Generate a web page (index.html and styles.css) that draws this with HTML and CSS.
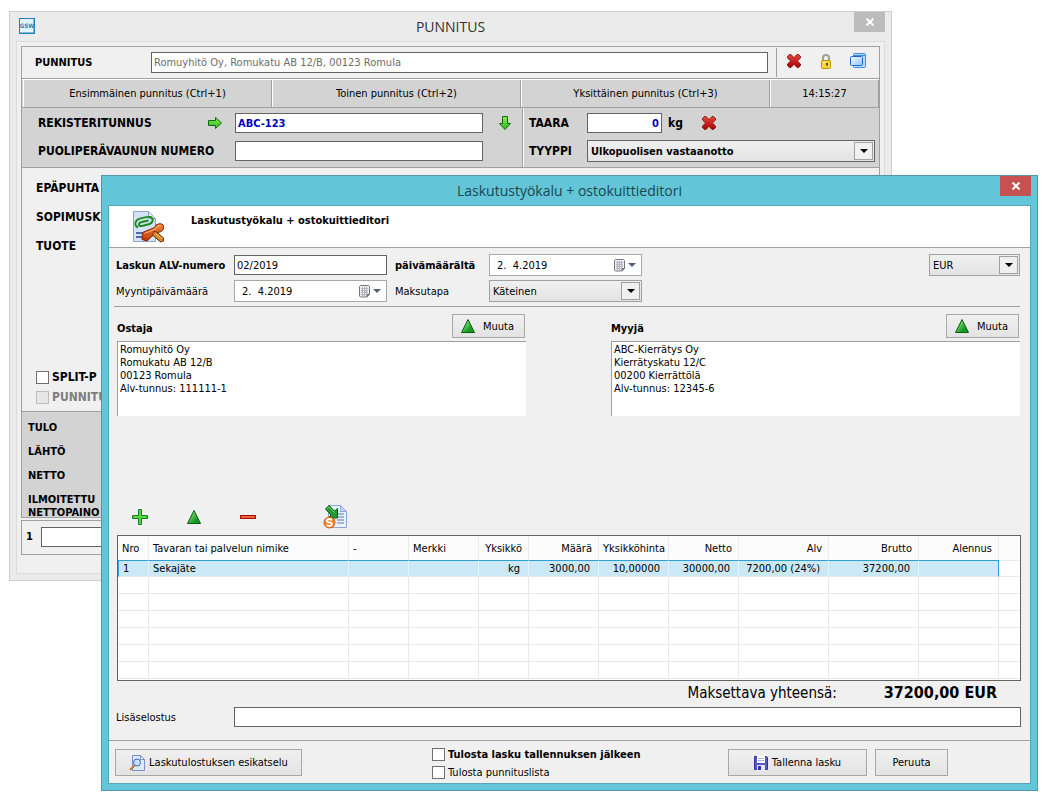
FILE: index.html
```html
<!DOCTYPE html>
<html lang="fi">
<head>
    <meta charset="UTF-8">
    <meta name="viewport" content="width=device-width, initial-scale=1.0">
    <title>Laskutustyökalu + ostokuittieditori</title>
    <link rel="stylesheet" href="styles.css">
</head>
<body>

<!-- Shared icons -->
<svg class="icon-defs" width="0" height="0" aria-hidden="true">
    <defs>
        <linearGradient id="red" x1="0" y1="0" x2="0" y2="1">
            <stop offset="0" stop-color="#e8473c"/>
            <stop offset="1" stop-color="#a80000"/>
        </linearGradient>
        <linearGradient id="lime" x1="0" y1="0" x2="0" y2="1">
            <stop offset="0" stop-color="#8cf04a"/>
            <stop offset="1" stop-color="#2fb41c"/>
        </linearGradient>
        <linearGradient id="green" x1="0" y1="0" x2="1" y2="1">
            <stop offset="0.2" stop-color="#8be07a"/>
            <stop offset="0.7" stop-color="#159a20"/>
        </linearGradient>
        <linearGradient id="blue" x1="0" y1="0" x2="1" y2="1">
            <stop offset="0" stop-color="#f4faff"/>
            <stop offset="1" stop-color="#8cc4f8"/>
        </linearGradient>
        <linearGradient id="orange" x1="0" y1="0" x2="0" y2="1">
            <stop offset="0" stop-color="#f58a3c"/>
            <stop offset="1" stop-color="#b83208"/>
        </linearGradient>
        <symbol id="cross" viewBox="0 0 16 16">
            <path d="M1.5 3.5 3.5 1.5H5L8 4.8 11 1.5h1.5l2 2V5l-3.2 3 3.2 3v1.5l-2 2H11L8 11.2 5 14.5H3.500l-2-2V11l3.200-3L1.500 5z" fill="url(#red)" stroke="#8c1410"/>
        </symbol>
        <symbol id="triangle" viewBox="0 0 16 16">
            <path d="M8 1.500 14.500 14.500H1.500z" fill="url(#green)" stroke="#0a5c14"/>
        </symbol>
        <symbol id="calendar" viewBox="0 0 12 13">
            <path d="M1.500.5h8l1 1v8l-2.500 2.500h-6.500l-1-1v-9.500z" fill="#ececf2" stroke="#77777d"/>
            <path d="M2 3.500h7M2 5.500h7M2 7.500h7M2 9.500h5M3.500 2v9M5.500 2v9M7.500 2v7" stroke="#b4b4c2"/>
            <path d="M10.500 9.500h-2.500v2.500z" fill="#66666c" stroke="#77777d"/>
        </symbol>
    </defs>
</svg>

<div class="desktop">

    <!-- Weighing window -->
    <div class="window main-window">
        <div class="titlebar">
            <svg class="app-icon" width="16" height="16" viewBox="0 0 16 16">
                <rect x=".5" y=".5" width="15" height="15" fill="#e4f4fc" stroke="#2382b4"/>
                <path d="M15 1v14H1" fill="none" stroke="#2382b4"/>
                <text x="8" y="10" text-anchor="middle">GSW</text>
            </svg>
            <h1>PUNNITUS</h1>
            <button type="button" class="close" aria-label="Sulje">
                <svg width="8" height="8" viewBox="0 0 8 8"><path d="M.5.5l7 7M7.500.5l-7 7"/></svg>
            </button>
        </div>
        <div class="client">
            <div class="panel">
                <div class="site-row">
                    <label for="site">PUNNITUS</label>
                    <input type="text" id="site" value="Romuyhitö Oy, Romukatu AB 12/B, 00123 Romula">
                    <div class="site-tools">
                        <button type="button" class="icon-btn" aria-label="Poista"><svg width="16" height="16"><use href="#cross"/></svg></button>
                        <button type="button" class="icon-btn" aria-label="Lukitse">
                            <svg width="16" height="16" viewBox="0 0 16 16">
                                <path d="M5 8V4.500Q5 2 8 2t3 2.500V8" fill="none" stroke="#a0a094" stroke-width="2"/>
                                <rect x="3.500" y="7.500" width="9" height="8" rx="1" fill="#f4d838" stroke="#b8920c"/>
                                <path d="M5 9.500h3" stroke="#fff6a8"/>
                                <path d="M8 10h2v1l-.5 2h-1L8 11z" fill="#5a4400"/>
                            </svg>
                        </button>
                        <button type="button" class="icon-btn" aria-label="Ikkunat">
                            <svg width="16" height="16" viewBox="0 0 16 16">
                                <rect x="3.500" y=".5" width="12" height="14" rx="1" fill="#b4dcff" stroke="#3c8ce0"/>
                                <path d="M4 2.500h11" stroke="#3c8ce0"/>
                                <rect x=".5" y="3.500" width="12" height="9" rx="1" fill="url(#blue)" stroke="#2468c8"/>
                            </svg>
                        </button>
                    </div>
                </div>
                <div class="modes">
                    <button type="button">Ensimmäinen punnitus (Ctrl+1)</button>
                    <button type="button">Toinen punnitus (Ctrl+2)</button>
                    <button type="button">Yksittäinen punnitus (Ctrl+3)</button>
                    <div class="clock">14:15:27</div>
                </div>
                <div class="weigh">
                    <div class="weigh-left">
                        <div class="weigh-row">
                            <label for="plate">REKISTERITUNNUS</label>
                            <svg class="next" width="16" height="16" viewBox="0 0 16 16"><path d="M1.500 5.500h7v-3l6 5.500-6 5.500v-3h-7z" fill="url(#lime)" stroke="#0e6a10"/></svg>
                            <input type="text" id="plate" class="value" value="ABC-123">
                            <svg class="down" width="16" height="16" viewBox="0 0 16 16"><path d="M5.500 1.500v7h-3l5.500 6 5.500-6h-3v-7z" fill="url(#lime)" stroke="#0e6a10"/></svg>
                        </div>
                        <div class="weigh-row">
                            <label for="trailer">PUOLIPERÄVAUNUN NUMERO</label>
                            <input type="text" id="trailer">
                        </div>
                    </div>
                    <div class="weigh-right">
                        <div class="weigh-row">
                            <label for="tare">TAARA</label>
                            <input type="text" id="tare" class="value tare" value="0">
                            <span class="unit">kg</span>
                            <button type="button" class="icon-btn" aria-label="Tyhjennä"><svg width="16" height="16"><use href="#cross"/></svg></button>
                        </div>
                        <div class="weigh-row">
                            <label for="type">TYYPPI</label>
                            <span class="select dark">
                                <select id="type"><option>Ulkopuolisen vastaanotto</option></select>
                            </span>
                        </div>
                    </div>
                </div>
                <div class="details">
                    <p>EPÄPUHTA</p>
                    <p>SOPIMUSK</p>
                    <p>TUOTE</p>
                    <label class="check split"><input type="checkbox">SPLIT-P</label>
                    <label class="check disabled"><input type="checkbox" disabled>PUNNITU</label>
                </div>
                <div class="weights">
                    <p>TULO</p>
                    <p>LÄHTÖ</p>
                    <p>NETTO</p>
                    <p>ILMOITETTU<br>NETTOPAINO</p>
                </div>
            </div>
            <div class="line-box">
                <label for="line1">1</label>
                <input type="text" id="line1">
            </div>
        </div>
    </div>

    <!-- Invoice dialog -->
    <div class="window dialog">
        <div class="titlebar">
            <h1>Laskutustyökalu + ostokuittieditori</h1>
            <button type="button" class="close" aria-label="Sulje">
                <svg width="8" height="8" viewBox="0 0 8 8"><path d="M.5.5l7 7M7.500.5l-7 7"/></svg>
            </button>
        </div>
        <form class="client">
            <div class="dialog-head">
                <svg width="32" height="32" viewBox="0 0 32 32">
                    <path d="M1.500.5h15l7 7v23h-22z" fill="#d4e4f8" stroke="#8ca0c8"/>
                    <path d="M16.500.5v7h7z" fill="#f6faff" stroke="#8ca0c8"/>
                    <path d="M4 22h7M4 26h7" stroke="#5468b0" stroke-width="2"/>
                    <path d="M6 16.500q-3-1-2.500-4.500t5-4.500l7-1.500q4-1 5 2t-3 5l-7.500 2q-3 .5-3-1.500t3-2.500l6.500-1.500" fill="none" stroke="#1c8a24" stroke-width="2"/>
                    <path d="M5 14q-1-4 4-5.500l7-1.500" fill="none" stroke="#a4e4a0"/>
                    <path d="M10.500 21.500l12-5 1.500-2.500q3-2 6-1l2 2q0 4-3 5.500l-6 2-8 7.500-5-1.500z" fill="url(#orange)" stroke="#8c2404"/>
                    <path d="M21.500 20.500l3 .5 7 6v3l-3 1-8-7z" fill="#d88428" stroke="#6c2c04"/>
                    <path d="M12.500 22.500l11-4.500 2-3 3-.5" fill="none" stroke="#ffb070"/>
                    <path d="M12 25l4 1 6-5" fill="none" stroke="#d85418"/>
                    <path d="M23.500 22.500l6 5" stroke="#ffcc60"/>
                </svg>
                <h2>Laskutustyökalu + ostokuittieditori</h2>
            </div>

            <div class="fields">
                <label for="vat" class="strong">Laskun ALV-numero</label>
                <input type="text" id="vat" value="02/2019">
                <label for="from" class="strong">päivämäärältä</label>
                <div class="date">
                    <input type="text" id="from" value="2.  4.2019">
                    <svg width="12" height="13"><use href="#calendar"/></svg>
                    <svg width="8" height="5"><path d="M0 0h8l-4 4z" fill="#50607c"/></svg>
                </div>
                <span class="select currency">
                    <select aria-label="Valuutta"><option>EUR</option></select>
                </span>
                <label for="sale">Myyntipäivämäärä</label>
                <div class="date">
                    <input type="text" id="sale" value="2.  4.2019">
                    <svg width="12" height="13"><use href="#calendar"/></svg>
                    <svg width="8" height="5"><path d="M0 0h8l-4 4z" fill="#50607c"/></svg>
                </div>
                <label for="pay">Maksutapa</label>
                <span class="select">
                    <select id="pay"><option>Käteinen</option></select>
                </span>
            </div>

            <div class="parties">
                <div class="party">
                    <div class="party-head">
                        <label for="buyer">Ostaja</label>
                        <button type="button" class="btn"><svg width="16" height="16"><use href="#triangle"/></svg>Muuta</button>
                    </div>
                    <textarea id="buyer">Romuyhitö Oy
Romukatu AB 12/B
00123 Romula
Alv-tunnus: 111111-1</textarea>
                </div>
                <div class="party">
                    <div class="party-head">
                        <label for="seller">Myyjä</label>
                        <button type="button" class="btn"><svg width="16" height="16"><use href="#triangle"/></svg>Muuta</button>
                    </div>
                    <textarea id="seller">ABC-Kierrätys Oy
Kierrätyskatu 12/C
00200 Kierrättölä
Alv-tunnus: 12345-6</textarea>
                </div>
            </div>

            <div class="tools">
                <button type="button" class="icon-btn" aria-label="Lisää">
                    <svg width="16" height="16" viewBox="0 0 16 16"><path d="M6.500.5h3v6h6v3h-6v6h-3v-6h-6v-3h6z" fill="#5cd444" stroke="#128020"/></svg>
                </button>
                <button type="button" class="icon-btn" aria-label="Muuta"><svg width="16" height="16"><use href="#triangle"/></svg></button>
                <button type="button" class="icon-btn" aria-label="Poista">
                    <svg width="16" height="16" viewBox="0 0 16 16"><rect x=".5" y="6.500" width="15" height="3" fill="#f0603c" stroke="#a01408"/></svg>
                </button>
                <button type="button" class="icon-btn import" aria-label="Tuo">
                    <svg width="24" height="24" viewBox="0 0 24 24">
                        <path d="M5.500.5h12l6 6v16h-18z" fill="#eaf2fc" stroke="#8ca4d4"/>
                        <path d="M17.500.5v6h6z" fill="#c4dcf8" stroke="#8ca4d4"/>
                        <path d="M14 9h7M14 12h7M14 15h7M14 18h7" stroke="#6070b0"/>
                        <path d="M2.500 4l3.500-3.500 5.500 5.500 3-2.500v9.500h-9.500l3-3z" fill="#1f9c34" stroke="#0a5c14"/>
                        <path d="M4 4l2-2 5.500 5.500" fill="none" stroke="#6cd068"/>
                        <circle cx="6.500" cy="17.500" r="5.500" fill="#f08020" stroke="#d06008"/>
                        <path d="M9 15q-4-2-5 0t2.500 2.500 2 2.500-5 0" fill="none" stroke="#fff" stroke-width="2"/>
                    </svg>
                </button>
            </div>

            <div class="grid-box">
                <table>
                    <colgroup>
                        <col class="c-nr"><col class="c-name"><col class="c-dash"><col class="c-num"><col class="c-unit"><col class="c-num"><col class="c-num"><col class="c-num"><col class="c-sum"><col class="c-sum"><col class="c-disc"><col>
                    </colgroup>
                    <thead>
                        <tr>
                            <th>Nro</th><th>Tavaran tai palvelun nimike</th><th>-</th><th>Merkki</th>
                            <th class="num">Yksikkö</th><th class="num">Määrä</th><th class="num">Yksikköhinta</th><th class="num">Netto</th>
                            <th class="num">Alv</th><th class="num">Brutto</th><th class="num">Alennus</th><th></th>
                        </tr>
                    </thead>
                    <tbody>
                        <tr class="selected">
                            <td>1</td><td>Sekajäte</td><td></td><td></td>
                            <td class="num">kg</td><td class="num">3000,00</td><td class="num">10,00000</td><td class="num">30000,00</td>
                            <td class="num">7200,00 (24%)</td><td class="num">37200,00</td><td></td><td></td>
                        </tr>
                        <tr><td></td><td></td><td></td><td></td><td></td><td></td><td></td><td></td><td></td><td></td><td></td><td></td></tr>
                        <tr><td></td><td></td><td></td><td></td><td></td><td></td><td></td><td></td><td></td><td></td><td></td><td></td></tr>
                        <tr><td></td><td></td><td></td><td></td><td></td><td></td><td></td><td></td><td></td><td></td><td></td><td></td></tr>
                        <tr><td></td><td></td><td></td><td></td><td></td><td></td><td></td><td></td><td></td><td></td><td></td><td></td></tr>
                        <tr><td></td><td></td><td></td><td></td><td></td><td></td><td></td><td></td><td></td><td></td><td></td><td></td></tr>
                        <tr><td></td><td></td><td></td><td></td><td></td><td></td><td></td><td></td><td></td><td></td><td></td><td></td></tr>
                    </tbody>
                </table>
            </div>

            <div class="total">
                <span>Maksettava yhteensä:</span>
                <strong>37200,00 EUR</strong>
            </div>

            <div class="note">
                <label for="note">Lisäselostus</label>
                <input type="text" id="note">
            </div>

            <div class="actions">
                <button type="button" class="btn preview">
                    <svg width="16" height="16" viewBox="0 0 16 16">
                        <path d="M3.500.5h8l4 4v11h-12z" fill="#dceafc" stroke="#7890c8"/>
                        <path d="M11.500.5v4h4z" fill="#fff" stroke="#7890c8"/>
                        <circle cx="8" cy="7.500" r="3.500" fill="#c4e0fc" stroke="#4464b0"/>
                        <path d="M5.500 10.500L1 15" stroke="#c87830" stroke-width="2"/>
                    </svg>
                    Laskutulostuksen esikatselu
                </button>
                <div class="checks">
                    <label class="check strong"><input type="checkbox">Tulosta lasku tallennuksen jälkeen</label>
                    <label class="check"><input type="checkbox">Tulosta punnituslista</label>
                </div>
                <button type="submit" class="btn save">
                    <svg width="14" height="16" viewBox="0 0 14 16">
                        <path d="M.5 1.500h12l1 1v12H.5z" fill="#5458c4" stroke="#30349c"/>
                        <rect x="3" y="1" width="8" height="7" fill="#fff"/>
                        <path d="M4 3.500h6M4 5.500h6" stroke="#b0b4d8"/>
                        <rect x="3" y="10" width="8" height="5" fill="#e4e6f4"/>
                        <rect x="4" y="11" width="3" height="4" fill="#30349c"/>
                    </svg>
                    Tallenna lasku
                </button>
                <button type="button" class="btn cancel">Peruuta</button>
            </div>
        </form>
    </div>

</div>

</body>
</html>
```
FILE: styles.css
```css
* {
    box-sizing: border-box;
}

body {
    margin: 0;
    background: #fff;
    color: #000;
    font-family: "DejaVu Sans Condensed", "DejaVu Sans", sans-serif;
    font-size: 11px;
    line-height: 13px;
}

h1, h2, p {
    margin: 0;
}

input, select, textarea, button {
    font: inherit;
    color: inherit;
    border-radius: 0;
    margin: 0;
}

svg {
    display: block;
    flex: none;
}

.icon-defs {
    position: absolute;
}

.desktop {
    position: relative;
    min-height: 100vh;
}

/* Windows */
.window {
    position: absolute;
}

.main-window {
    left: 9px;
    right: 159px;
    top: 11px;
    background: #ebebeb;
    border: 1px solid #cbcfcf;
    padding: 0 6px 6px;
}

.dialog {
    left: 101px;
    right: 13px;
    top: 175px;
    background: #62c5d8;
    border: 1px solid #5497a6;
    padding: 0 6px 6px;
}

.titlebar {
    display: flex;
    align-items: center;
    justify-content: center;
    height: 29px;
    position: relative;
}

.titlebar h1 {
    font-family: "Open Sans", "Noto Sans", sans-serif;
    font-size: 14px;
    font-weight: normal;
    line-height: 20px;
    color: #333;
}

.dialog .titlebar h1 {
    color: #1c4650;
}

.app-icon {
    position: absolute;
    left: 3px;
    top: 6px;
}

.app-icon text {
    font-size: 6px;
    font-weight: bold;
    fill: #2382b4;
}

.close {
    position: absolute;
    right: 0;
    top: 0;
    width: 31px;
    height: 20px;
    border: none;
    background: #bcbcbc;
    display: flex;
    align-items: center;
    justify-content: center;
}

.dialog .close {
    background: #c75050;
}

.close path {
    stroke: #fff;
    stroke-width: 2;
}

.client {
    background: #f0f0f0;
    border: 1px solid #d8dcdc;
}

.dialog .client {
    border-color: #5aa5b5;
}

/* Common controls */
input[type="text"] {
    height: 20px;
    min-width: 0;
    border: 1px solid #646464;
    background: #fff;
    padding: 0 2px;
}

input[type="checkbox"] {
    appearance: none;
    width: 13px;
    height: 13px;
    border: 1px solid #707070;
    background: #fff;
    flex: none;
}

.check {
    display: flex;
    align-items: center;
    gap: 3px;
}

.strong {
    font-weight: bold;
}

.icon-btn {
    border: none;
    background: none;
    padding: 0;
}

.btn {
    display: flex;
    align-items: center;
    justify-content: center;
    border: 1px solid #a8a8a8;
    background: linear-gradient(#f0f0f0, #e3e3e3);
    padding: 0;
}

.select {
    position: relative;
    display: flex;
    height: 22px;
}

.select select {
    appearance: none;
    width: 100%;
    border: 1px solid #a0a0a0;
    background: linear-gradient(#f0f0f0, #e3e3e3);
    padding: 0 20px 0 3px;
}

.select::before {
    content: "";
    position: absolute;
    right: 2px;
    top: 2px;
    bottom: 2px;
    width: 17px;
    border: 1px solid #a0a0a0;
    background: #f0f0f0;
    pointer-events: none;
}

.select::after {
    content: "";
    position: absolute;
    right: 7px;
    top: 9px;
    border: 4px solid transparent;
    border-top-color: #000;
    border-bottom: none;
    pointer-events: none;
}

.select.dark select {
    border-color: #646464;
}

/* Weighing window */
.main-window .client {
    padding: 4px 4px 18px;
}

.main-window label,
.main-window p {
    font-weight: bold;
}

.panel {
    border: 1px solid #a0a0a0;
}

.site-row {
    display: flex;
    align-items: center;
    height: 32px;
    padding-left: 13px;
    border-bottom: 1px solid #a0a0a0;
}

.site-row label {
    width: 116px;
}

.site-row input[type="text"] {
    flex: 1;
    height: 21px;
    color: #6d6d6d;
}

.site-tools {
    display: flex;
    align-items: center;
    gap: 16px;
    height: 29px;
    margin-left: 8px;
    padding: 0 13px 3px 9px;
    border-left: 1px solid #a0a0a0;
}

.modes {
    display: grid;
    grid-template-columns: 249fr 249fr 249fr 109fr;
    height: 29px;
    padding-left: 1px;
    background: #d3d3d3;
    border-top: 1px solid #fff;
    border-bottom: 1px solid #a0a0a0;
}

.modes button,
.clock {
    border: none;
    border-left: 1px solid #fff;
    border-right: 1px solid #a0a0a0;
    background: none;
    padding: 0;
    line-height: 27px;
    text-align: center;
}

.weigh {
    display: grid;
    grid-template-columns: 501fr 356fr;
    background: #d3d3d3;
    border-bottom: 1px solid #a0a0a0;
}

.weigh-left,
.weigh-right {
    padding: 4px 4px 5px 16px;
    display: grid;
    gap: 6px;
}

.weigh-left {
    border-right: 1px solid #a0a0a0;
    padding-right: 39px;
}

.weigh-right {
    border-left: 1px solid #fff;
    padding-left: 5px;
}

.weigh-row {
    display: flex;
    align-items: center;
    height: 22px;
    position: relative;
}

.weigh-row label,
.details {
    font-size: 12px;
}

.weigh-left label {
    width: 197px;
}

.weigh-left input[type="text"] {
    flex: 1;
}

.next {
    position: absolute;
    left: 169px;
}

.down {
    position: absolute;
    right: -30px;
}

.weigh-right label {
    width: 58px;
}

.value {
    font-weight: bold;
    color: #0000c8;
}

input.tare {
    width: 75px;
    text-align: right;
}

.unit {
    width: 33px;
    margin-left: 6px;
    font-size: 12px;
    font-weight: bold;
}

.weigh-right .select {
    flex: 1;
    font-weight: bold;
}

.details {
    height: 243px;
    padding: 14px 14px 0;
}

.details p {
    margin-bottom: 16px;
}

.check.split {
    margin-top: 118px;
    margin-bottom: 7px;
}

.check.disabled {
    color: #7d7d7d;
}

.check.disabled input {
    border-color: #bcbcbc;
    background: #e6e6e6;
}

.weights {
    height: 106px;
    padding: 9px 6px 0;
    background: #d3d3d3;
    border-top: 1px solid #a0a0a0;
}

.weights p {
    margin-bottom: 11px;
}

.line-box {
    display: flex;
    align-items: center;
    height: 35px;
    margin-top: 2px;
    padding: 0 4px 2px;
    border: 1px solid #a0a0a0;
}

.line-box label {
    width: 15px;
}

.line-box input[type="text"] {
    flex: 1;
}

/* Invoice dialog */
.dialog-head {
    display: flex;
    gap: 27px;
    height: 42px;
    padding: 5px 0 0 23px;
    background: #fff;
    border-bottom: 1px solid #a0a0a0;
}

.dialog-head h2 {
    font-size: 11px;
    line-height: 20px;
}

.fields {
    display: grid;
    grid-template-columns: 118px 153px 102px 153px 1fr;
    grid-auto-rows: 22px;
    align-items: center;
    row-gap: 4px;
    margin: 0 10px 0 5px;
    padding: 6px 0 4px 2px;
    border-bottom: 1px solid #a0a0a0;
}

.fields label:nth-of-type(even) {
    padding-left: 8px;
}

.date {
    display: flex;
    align-items: center;
    gap: 2px;
    height: 22px;
    padding-right: 5px;
    background: #fff;
    border: 1px solid #a8a8a8;
}

.date input[type="text"] {
    flex: 1;
    border: none;
    padding-left: 7px;
    white-space: pre;
}

.currency {
    width: 91px;
    justify-self: end;
}

.parties {
    display: grid;
    grid-template-columns: 1fr 1fr;
    gap: 85px;
    padding: 7px 10px 0 8px;
}

.party-head {
    display: flex;
    justify-content: space-between;
    align-items: center;
    height: 24px;
    padding-right: 1px;
    margin-bottom: 3px;
}

.party-head label {
    font-weight: bold;
    padding-top: 4px;
}

.party-head .btn {
    width: 73px;
    height: 24px;
    gap: 7px;
    padding-right: 3px;
}

textarea {
    display: block;
    width: 100%;
    height: 75px;
    resize: none;
    background: #fff;
    border: none;
    border-top: 1px solid #a0a0a0;
    border-left: 1px solid #a0a0a0;
    padding: 1px 2px;
    overflow: hidden;
}

.tools {
    display: flex;
    align-items: center;
    gap: 38px;
    height: 24px;
    margin: 89px 0 6px 23px;
}

.tools .import {
    margin-left: 29px;
}

.grid-box {
    margin: 0 9px 0 8px;
    border: 1px solid #646464;
    background: #fff;
    padding-bottom: 1px;
}

table {
    width: 100%;
    table-layout: fixed;
    border-collapse: separate;
    border-spacing: 0;
}

.c-nr { width: 31px; }
.c-name { width: 200px; }
.c-dash { width: 60px; }
.c-num { width: 70px; }
.c-unit { width: 50px; }
.c-sum { width: 90px; }
.c-disc { width: 80px; }

th {
    height: 24px;
    padding: 0 6px 0 4px;
    font-weight: normal;
    text-align: left;
    white-space: nowrap;
    background: #fcfcfc;
    border-right: 1px solid #ececec;
}

td {
    height: 17px;
    padding: 0 8px 0 4px;
    white-space: nowrap;
    border-right: 1px solid #e8e8e8;
    border-bottom: 1px solid #e8e8e8;
}

th:last-child,
td:last-child {
    border-right: none;
}

.num {
    text-align: right;
}

.selected td {
    background: #cbe8f6;
    border-top: 1px solid #2f9fd8;
    border-right-color: #e4f3fa;
    line-height: 15px;
}

.selected td:first-child {
    border-left: 1px solid #2f9fd8;
}

.selected td:nth-last-child(2) {
    border-right-color: #2f9fd8;
}

.selected td:last-child {
    background: none;
    border-top-color: #e8e8e8;
}

.total {
    display: flex;
    justify-content: flex-end;
    gap: 47px;
    padding: 0 33px 0 0;
    font-size: 15px;
    line-height: 24px;
}

.total strong {
    font-size: 16px;
}

.note {
    display: flex;
    align-items: center;
    margin-top: 2px;
    padding: 0 9px 13px 7px;
}

.note label {
    width: 118px;
}

.note input[type="text"] {
    flex: 1;
}

.actions {
    display: flex;
    align-items: flex-start;
    height: 43px;
    padding: 8px 82px 0 6px;
    border-top: 1px solid #a0a0a0;
}

.actions .btn {
    height: 27px;
    gap: 4px;
}

.preview {
    width: 187px;
}

.checks {
    display: grid;
    gap: 5px;
    margin: -1px auto 0 130px;
}

.save {
    width: 139px;
}

.cancel {
    width: 73px;
    margin-left: 8px;
}
```
